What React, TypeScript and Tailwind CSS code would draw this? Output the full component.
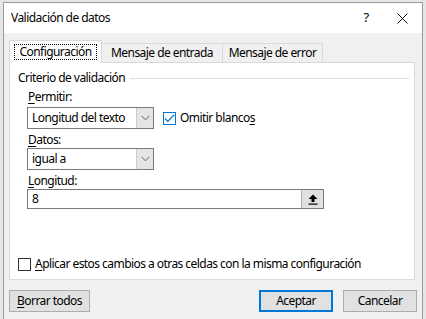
import React from 'react'

const font = { fontFamily: '"Noto Sans", "Segoe UI", Arial, sans-serif' }

function Chevron() {
  return (
    <svg width="9" height="6" viewBox="0 0 9 6" fill="none">
      <path d="M0.5 0.8 L4.5 4.8 L8.5 0.8" stroke="#606060" strokeWidth="1" />
    </svg>
  )
}

function Select({ value, width }: { value: string; width: string }) {
  return (
    <div className={`flex h-[22px] ${width} items-stretch border border-[#7a7a7a] bg-white`}>
      <div className="flex flex-1 items-center pl-[4px] text-black">{value}</div>
      <div className="flex w-[17px] items-center justify-center border-l border-[#cccccc] bg-[#e5e5e5]">
        <Chevron />
      </div>
    </div>
  )
}

function U({ children }: { children: React.ReactNode }) {
  return <span className="underline underline-offset-2">{children}</span>
}

export default function App() {
  return (
    <div className="h-[319px] w-[426px] overflow-hidden bg-[#e6e6e6] pl-[3px] pt-[2px]" style={font}>
      <div className="flex h-[330px] w-[420px] flex-col border-l border-r border-t border-[#9a9a9a] bg-[#f0f0f0] text-[12px] tracking-[-0.55px] text-black">
        {/* title bar */}
        <div className="flex h-[30px] shrink-0 items-center bg-white pl-[7px]">
          <span className="flex-1">Validación de datos</span>
          <span className="w-[20px] text-center text-[13px]">?</span>
          <div className="flex w-[46px] items-center justify-center pl-[6px]">
            <svg width="11" height="11" viewBox="0 0 11 11">
              <path d="M0.5 0.5 L10.5 10.5 M10.5 0.5 L0.5 10.5" stroke="#111" strokeWidth="1" />
            </svg>
          </div>
        </div>

        <div className="flex flex-col pl-[5px] pt-[7px]">
          {/* tabs */}
          <div className="flex h-[22px] items-end">
            <div className="relative z-10 -mb-px flex h-[23px] w-[93px] items-center justify-center border border-b-0 border-[#d9d9d9] bg-white">
              <span className="border border-dotted border-black px-[4px] leading-[14px]">Configuración</span>
            </div>
            <div className="flex h-[19px] w-[121px] items-center justify-center border border-b-0 border-l-0 border-[#d9d9d9]">
              Mensaje de entrada
            </div>
            <div className="flex h-[19px] w-[100px] items-center justify-center border border-b-0 border-l-0 border-[#d9d9d9]">
              Mensaje de error
            </div>
          </div>

          {/* panel */}
          <div className="flex h-[218px] w-[406px] flex-col border border-[#d9d9d9] bg-white pb-[7px] pl-[7px] pt-[7px]">
            <div className="flex h-[16px] items-center pr-[5px]">
              <span className="pl-px">Criterio de validación</span>
              <div className="ml-[5px] h-px flex-1 bg-[#dcdcdc]" />
            </div>

            <div className="flex flex-col pl-[10px]">
              <div className="mt-[3px] flex h-[16px] items-center pl-px">
                <U>P</U>ermitir:
              </div>
              <div className="mt-[2px] flex items-center">
                <Select value="Longitud del texto" width="w-[127px]" />
                <div className="ml-[9px] flex items-center">
                  <div className="flex h-[13px] w-[13px] items-center justify-center border border-[#0078d7] bg-white">
                    <svg width="11" height="9" viewBox="0 0 11 9" fill="none">
                      <path d="M0.8 4.4 L3.8 7.4 L10.2 0.8" stroke="#0078d7" strokeWidth="1.3" />
                    </svg>
                  </div>
                  <span className="ml-[4px]">
                    Omitir blanco<U>s</U>
                  </span>
                </div>
              </div>

              <div className="mt-[3px] flex h-[16px] items-center pl-px">
                <U>D</U>atos:
              </div>
              <Select value="igual a" width="w-[127px]" />

              <div className="mt-[3px] flex h-[16px] items-center pl-px">
                <U>L</U>ongitud:
              </div>
              <div className="flex h-[20px] w-[297px] items-stretch border border-[#7a7a7a] bg-white">
                <div className="flex flex-1 items-center pl-[4px]">8</div>
                <div className="flex w-[22px] items-center justify-center border-l border-[#adadad] bg-[#e1e1e1]">
                  <svg width="10" height="11" viewBox="0 0 10 11">
                    <path d="M5 0.5 L9.5 5 L6.5 5 L6.5 8 L3.5 8 L3.5 5 L0.5 5 Z" fill="#000" />
                    <rect x="0.5" y="9.5" width="9" height="1.2" fill="#000" />
                  </svg>
                </div>
              </div>
            </div>

            <div className="mt-auto flex h-[16px] items-center">
              <div className="ml-px h-[13px] w-[13px] border border-[#333333] bg-white" />
              <span className="ml-[4px]">
                <U>A</U>plicar estos cambios a otras celdas con la misma configuración
              </span>
            </div>
          </div>

          {/* buttons */}
          <div className="mt-[10px] flex items-center pr-[5px]">
            <div className="flex h-[22px] w-[81px] items-center justify-center border border-[#adadad] bg-[#e1e1e1]">
              <span>
                <U>B</U>orrar todos
              </span>
            </div>
            <div className="flex-1" />
            <div className="flex h-[22px] w-[74px] items-center justify-center border-2 border-[#0078d7] bg-[#e1e1e1]">
              Aceptar
            </div>
            <div className="ml-[10px] flex h-[22px] w-[74px] items-center justify-center border border-[#adadad] bg-[#e1e1e1]">
              Cancelar
            </div>
          </div>
        </div>
      </div>
    </div>
  )
}
